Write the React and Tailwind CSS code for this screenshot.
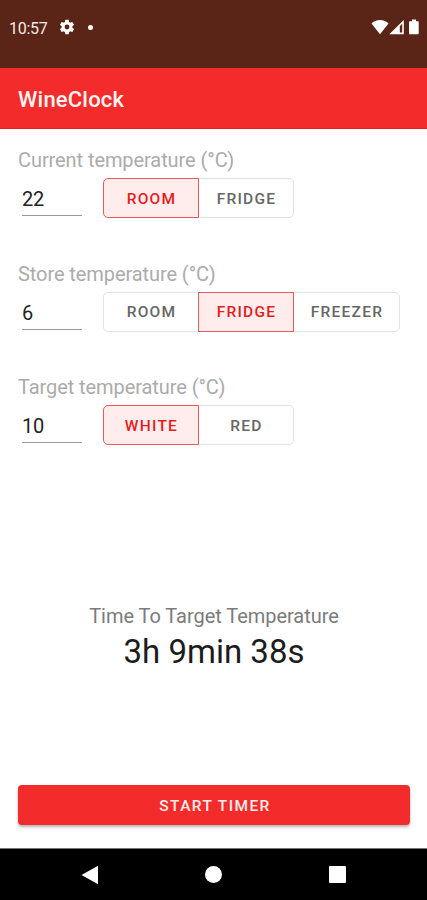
import clsx from 'clsx'

const FIELDS = [
  {
    label: 'Current temperature (°C)',
    value: '22',
    options: ['ROOM', 'FRIDGE'],
    selected: 'ROOM',
  },
  {
    label: 'Store temperature (°C)',
    value: '6',
    options: ['ROOM', 'FRIDGE', 'FREEZER'],
    selected: 'FRIDGE',
  },
  {
    label: 'Target temperature (°C)',
    value: '10',
    options: ['WHITE', 'RED'],
    selected: 'WHITE',
  },
]

function StatusBar() {
  return (
    <div className="h-[68px] shrink-0 bg-[#5a2417] text-white flex items-start justify-between pl-[9px] pr-[6px] pt-[19px]">
      <div className="flex items-center h-4">
        <span className="w-[39px] text-base leading-4 pt-[3px] whitespace-nowrap tracking-[-0.3px] text-[#f6e9e6]">10:57</span>
        <svg className="ml-[10px] w-[18px] h-[18px]" viewBox="0 0 24 24" fill="currentColor">
          <path d="M19.14 12.94c.04-.3.06-.61.06-.94 0-.32-.02-.64-.07-.94l2.03-1.58a.49.49 0 0 0 .12-.61l-1.92-3.32a.49.49 0 0 0-.59-.22l-2.39.96a7 7 0 0 0-1.62-.94l-.36-2.54a.48.48 0 0 0-.48-.41h-3.84a.47.47 0 0 0-.47.41l-.36 2.54c-.59.24-1.13.57-1.62.94l-2.39-.96a.48.48 0 0 0-.59.22L2.74 8.87a.47.47 0 0 0 .12.61l2.03 1.58c-.05.3-.09.63-.09.94s.02.64.07.94l-2.03 1.58a.49.49 0 0 0-.12.61l1.92 3.32c.12.22.37.29.59.22l2.39-.96c.5.38 1.03.7 1.62.94l.36 2.54c.05.24.24.41.48.41h3.84c.24 0 .44-.17.47-.41l.36-2.54a6.9 6.9 0 0 0 1.62-.94l2.39.96c.22.08.47 0 .59-.22l1.92-3.32a.47.47 0 0 0-.12-.61zM12 15.2a3.2 3.2 0 1 1 0-6.4 3.2 3.2 0 0 1 0 6.4z" />
        </svg>
        <span className="ml-[12px] w-[5px] h-[5px] rounded-full bg-white" />
      </div>
      <div className="flex items-start">
        <svg className="w-[18px] h-4" viewBox="0 0 18 16" fill="currentColor">
          <path d="M9 15.2.5 4.6C2.700 2.200 5.600 1 9 1s6.300 1.200 8.500 3.600z" />
        </svg>
        <svg className="w-4 h-4" viewBox="0 0 16 16" fill="currentColor">
          <path fillRule="evenodd" d="M.3 15.200 14.800 1v14.200zM10.800 7.200v6.300h2.400V4.800z" />
        </svg>
        <svg className="ml-[3px] mr-px w-[12px] h-4" viewBox="0 0 12 16" fill="currentColor">
          <path d="M4 .6h4v1.600h1.900c.5 0 .8.300.8.800v11.400c0 .5-.3.800-.8.800H1.800c-.5 0-.8-.3-.8-.8V3c0-.5.3-.8.8-.8H4z" />
        </svg>
      </div>
    </div>
  )
}

function ToggleGroup({ options, selected }) {
  return (
    <div className="flex">
      {options.map((option) => (
        <button
          key={option}
          type="button"
          className={clsx(
            'h-10 border pt-[3px] pl-px text-[15.5px] font-medium tracking-[1.25px] first:rounded-l-[5px] last:rounded-r-[5px] not-first:-ml-px',
            option === 'FREEZER' ? 'w-[107px]' : 'w-24',
            option === selected
              ? 'relative border-[#e85a5a] bg-[#ffeded] text-[#e51c1c]'
              : 'border-[#e2e2e2] bg-white text-[#666]'
          )}
        >
          {option}
        </button>
      ))}
    </div>
  )
}

function TemperatureField({ label, value, options, selected }) {
  return (
    <div className="h-[113.3px]">
      <p className="h-7 text-[20px] leading-7 tracking-[-0.08px] text-[#ababab] whitespace-nowrap">{label}</p>
      <div className="mt-1 flex">
        <div className="ml-1 mr-[21px] w-[60px] h-[38px] border-b border-[#999] text-[20px] leading-[42px] tracking-[-0.2px] text-[#222]">
          {value}
        </div>
        <ToggleGroup options={options} selected={selected} />
      </div>
    </div>
  )
}

function NavigationBar() {
  return (
    <div className="h-[52px] shrink-0 border-t border-[#777] bg-black text-white flex items-center justify-between pl-[80.5px] pr-[81.5px]">
      <svg className="w-[18px] h-5" viewBox="0 0 18 20" fill="currentColor">
        <path d="M17 .8v18.400L.5 10z" />
      </svg>
      <span className="w-[17px] h-[17px] rounded-full bg-white" />
      <span className="w-[17px] h-[17px] rounded-[1px] bg-white" />
    </div>
  )
}

export default function App() {
  return (
    <div className="w-[427px] h-[900px] flex flex-col overflow-hidden bg-white font-[Roboto,sans-serif]">
      <StatusBar />
      <header className="h-[61px] shrink-0 bg-[#f42b2b] border-b border-[#e81f1f] px-[18px] flex items-center">
        <h1 className="pt-[3px] text-[22px] font-medium tracking-[0.2px] text-[#fff3f1]">WineClock</h1>
      </header>
      <main className="flex-1 flex flex-col px-[18px] pt-[17.25px]">
        {FIELDS.map((field) => (
          <TemperatureField key={field.label} {...field} />
        ))}
        <div className="mt-[115.75px] pl-px text-center">
          <p className="text-[20px] leading-7 tracking-[-0.04px] text-[#7b7b7b]">Time To Target Temperature</p>
          <p className="text-[33px] leading-[44px] text-[#1c1c1c]">3h 9min 38s</p>
        </div>
        <button
          type="button"
          className="mt-auto mb-[23px] -mr-px h-10 rounded-[4px] bg-[#f42b2b] shadow-[0_2px_3px_rgba(0,0,0,0.3)] pt-[3px] pl-[2px] text-[15.5px] font-medium tracking-[1.4px] text-[#ffeeec]"
        >
          START TIMER
        </button>
      </main>
      <NavigationBar />
    </div>
  )
}
